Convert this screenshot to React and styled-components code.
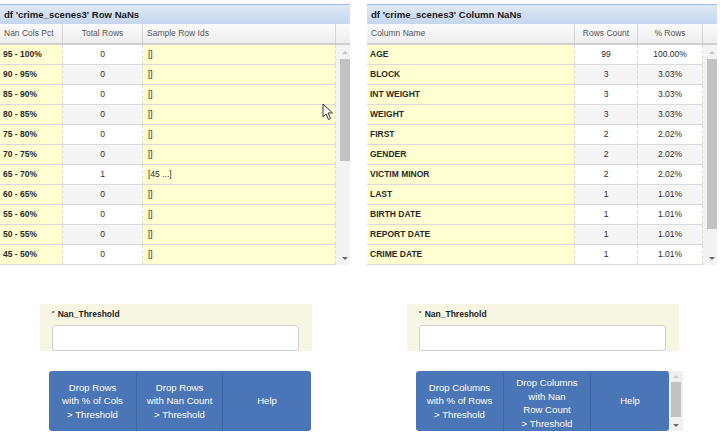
import React from 'react';
import styled, { createGlobalStyle } from 'styled-components';

const Global = createGlobalStyle`
	html, body { margin: 0; padding: 0; background: #fff; }
	body { font-family: "Liberation Sans", Arial, sans-serif; }
`;

const Page = styled.div`
	position: relative;
	width: 720px;
	height: 436px;
	overflow: hidden;
	display: flex;
	gap: 17px;
	padding-top: 4px;
	box-sizing: border-box;
`;

const Column = styled.div`
	width: 350px;
	display: flex;
	flex-direction: column;
`;

const Panel = styled.div`
	width: 350px;
`;

const TitleBar = styled.div`
	height: 20px;
	border-top: 1px solid #99bbe8;
	box-sizing: border-box;
	background: linear-gradient(#e0e9f6, #c4d6ee);
	font-size: 9.6px;
	font-weight: bold;
	color: #1c1c1c;
	line-height: 19px;
	padding-left: 4px;
`;

const HeaderRow = styled.div`
	display: grid;
	grid-template-columns: ${p => p.$cols};
	height: 21px;
	background: linear-gradient(#fbfbfb, #eeeeee);
	border-bottom: 2px solid #cfcfcf;
	box-sizing: border-box;
`;

const HeadCell = styled.div`
	font-size: 8.5px;
	color: #555;
	line-height: 19px;
	padding: 0 ${p => (p.$align === 'left' ? '4px' : '0')};
	text-align: ${p => p.$align || 'center'};
	border-right: 1px solid #d5d5d5;
	white-space: nowrap;
	overflow: hidden;
	&:last-child { border-right: none; }
`;

const Body = styled.div`
	display: flex;
	height: 220px;
	overflow: hidden;
`;

const Rows = styled.div`
	flex: 1;
`;

const Row = styled.div`
	display: grid;
	grid-template-columns: ${p => p.$cols};
	height: 20px;
	border-bottom: 1px solid #dadada;
	box-sizing: border-box;
`;

const Cell = styled.div`
	font-size: 8.5px;
	font-weight: ${p => (p.$bold ? 'bold' : 'normal')};
	color: #2a2a2a;
	line-height: 19px;
	text-align: ${p => p.$align || 'center'};
	padding: 0 ${p => (p.$align === 'left' ? (p.$pad || '4px') : '0')};
	background: ${p => (p.$yellow ? '#ffffd2' : p.$stripe ? '#f5f5f5' : '#ffffff')};
	border-right: 1px dashed #dcdcc8;
	white-space: nowrap;
	overflow: hidden;
`;

const Scroll = styled.div`
	width: 14px;
	display: flex;
	flex-direction: column;
	align-items: flex-end;
	background: #f3f3f3;
	flex-shrink: 0;
`;

const Arrow = styled.div`
	width: 10px;
	height: ${p => p.$h || 14}px;
	display: flex;
	align-items: center;
	justify-content: center;
	&::after {
		content: '';
		border-left: 3px solid transparent;
		border-right: 3px solid transparent;
		${p => (p.$down ? 'border-top: 3px solid #6a6a6a;' : 'border-bottom: 3px solid #c4c4c4;')}
	}
`;

const Thumb = styled.div`
	width: 10px;
	height: ${p => p.$h}px;
	background: #c2c2c2;
`;

const Spacer = styled.div`
	flex: 1;
`;

const Form = styled.div`
	margin: 39px 0 0 40px;
	width: 272px;
	height: 47px;
	background: #f7f6e2;
	padding: 2px 13px 0 12px;
	box-sizing: border-box;
`;

const Label = styled.div`
	font-size: 8.5px;
	font-weight: bold;
	color: #222;
	line-height: 14px;
	height: 19px;
	sup { font-size: 6px; vertical-align: 2px; margin-right: 1px; }
`;

const Input = styled.input`
	display: block;
	width: 247px;
	height: 26px;
	box-sizing: border-box;
	border: 1px solid #cfcfcf;
	border-radius: 3px;
	background: #fff;
	margin: 0;
	outline: none;
`;

const ButtonBar = styled.div`
	margin: 20px 0 0 49px;
	display: flex;
	height: 60px;
	overflow: hidden;
`;

const Buttons = styled.div`
	display: flex;
	border-radius: 3px;
	overflow: hidden;
	background: #4a75b6;
`;

const Btn = styled.div`
	width: ${p => p.$w}px;
	height: 60px;
	box-sizing: border-box;
	border-right: 1px solid #3e66a3;
	color: #fff;
	font-size: 9.6px;
	line-height: 13.5px;
	text-align: center;
	display: flex;
	flex-direction: column;
	justify-content: ${p => (p.$top ? 'flex-start' : 'center')};
	padding-top: ${p => (p.$top ? '5px' : '0')};
	&:last-child { border-right: none; }
`;

const BarScroll = styled(Scroll)`
	height: 60px;
	background: #f0f0f0;
	align-items: center;
`;

const Cursor = styled.svg`
	position: absolute;
	left: 322px;
	top: 103px;
`;

const leftCols = '63px 80px 193px';
const rightCols = '208px 63px 65px';

const rowData = [
	['95 - 100%', 0, '[]'], ['90 - 95%', 0, '[]'], ['85 - 90%', 0, '[]'], ['80 - 85%', 0, '[]'],
	['75 - 80%', 0, '[]'], ['70 - 75%', 0, '[]'], ['65 - 70%', 1, '[45 ...]'], ['60 - 65%', 0, '[]'],
	['55 - 60%', 0, '[]'], ['50 - 55%', 0, '[]'], ['45 - 50%', 0, '[]'],
];

const colData = [
	['AGE', 99, '100.00%'], ['BLOCK', 3, '3.03%'], ['INT WEIGHT', 3, '3.03%'], ['WEIGHT', 3, '3.03%'],
	['FIRST', 2, '2.02%'], ['GENDER', 2, '2.02%'], ['VICTIM MINOR', 2, '2.02%'], ['LAST', 1, '1.01%'],
	['BIRTH DATE', 1, '1.01%'], ['REPORT DATE', 1, '1.01%'], ['CRIME DATE', 1, '1.01%'],
];

const TableScroll = ({ thumb }) => (
	<Scroll>
		<Arrow />
		<Thumb $h={thumb} />
		<Spacer />
		<Arrow $down />
	</Scroll>
);

const ThresholdForm = () => (
	<Form>
		<Label><sup>*</sup> Nan_Threshold</Label>
		<Input />
	</Form>
);

export default function App() {
	return (
		<Page>
			<Global />
			<Column>
				<Panel>
					<TitleBar>df 'crime_scenes3' Row NaNs</TitleBar>
					<HeaderRow $cols={leftCols + ' 14px'}>
						<HeadCell $align="left">Nan Cols Pct</HeadCell>
						<HeadCell>Total Rows</HeadCell>
						<HeadCell $align="left">Sample Row Ids</HeadCell>
						<HeadCell />
					</HeaderRow>
					<Body>
						<Rows>
							{rowData.map((r, i) => (
								<Row key={i} $cols={leftCols}>
									<Cell $yellow $bold $align="left" $pad="3px">{r[0]}</Cell>
									<Cell $stripe={i % 2 === 1}>{r[1]}</Cell>
									<Cell $yellow $align="left" $pad="5px">{r[2]}</Cell>
								</Row>
							))}
						</Rows>
						<TableScroll thumb={102} />
					</Body>
				</Panel>
				<ThresholdForm />
				<ButtonBar>
					<Buttons>
						<Btn $w={88}><span>Drop Rows</span><span>with % of Cols</span><span>&gt; Threshold</span></Btn>
						<Btn $w={86}><span>Drop Rows</span><span>with Nan Count</span><span>&gt; Threshold</span></Btn>
						<Btn $w={88}><span>Help</span></Btn>
					</Buttons>
				</ButtonBar>
			</Column>
			<Column>
				<Panel>
					<TitleBar>df 'crime_scenes3' Column NaNs</TitleBar>
					<HeaderRow $cols={rightCols + ' 14px'}>
						<HeadCell $align="left">Column Name</HeadCell>
						<HeadCell>Rows Count</HeadCell>
						<HeadCell>% Rows</HeadCell>
						<HeadCell />
					</HeaderRow>
					<Body>
						<Rows>
							{colData.map((r, i) => (
								<Row key={i} $cols={rightCols}>
									<Cell $yellow $bold $align="left" $pad="3px">{r[0]}</Cell>
									<Cell $stripe={i % 2 === 1}>{r[1]}</Cell>
									<Cell $stripe={i % 2 === 1}>{r[2]}</Cell>
								</Row>
							))}
						</Rows>
						<TableScroll thumb={170} />
					</Body>
				</Panel>
				<ThresholdForm />
				<ButtonBar>
					<Buttons>
						<Btn $w={88}><span>Drop Columns</span><span>with % of Rows</span><span>&gt; Threshold</span></Btn>
						<Btn $w={87} $top><span>Drop Columns</span><span>with Nan</span><span>Row Count</span><span>&gt; Threshold</span></Btn>
						<Btn $w={78}><span>Help</span></Btn>
					</Buttons>
					<BarScroll>
						<Arrow $h={11} />
						<Thumb $h={35} />
						<Spacer />
						<Arrow $h={11} $down />
					</BarScroll>
				</ButtonBar>
			</Column>
			<Cursor width="12" height="18" viewBox="0 0 12 18">
				<path d="M1 1 L1 14 L4 11 L6.5 16.5 L8.5 15.5 L6 10 L10.5 10 Z" fill="#fff" stroke="#333" strokeWidth="1" strokeLinejoin="round" />
			</Cursor>
		</Page>
	);
}
